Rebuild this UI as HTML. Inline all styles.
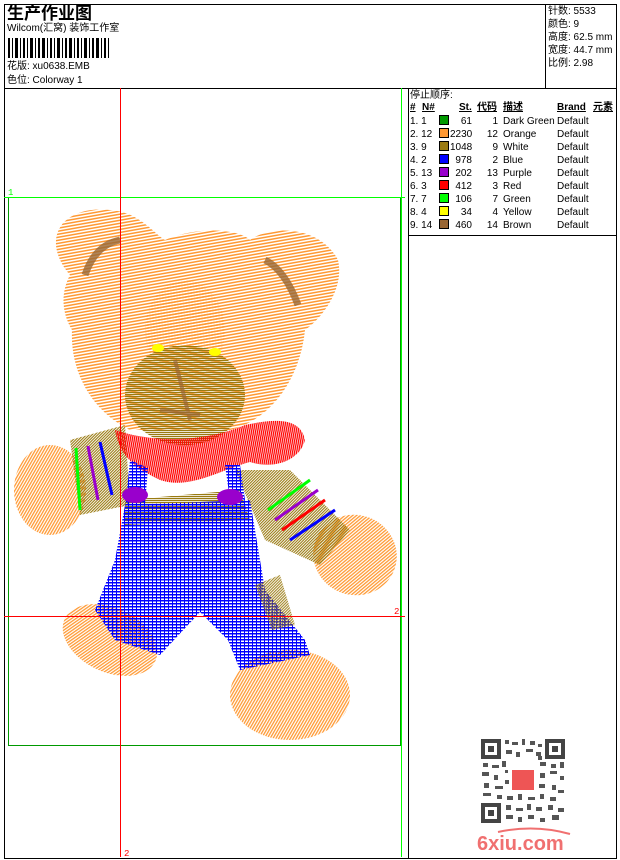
<!DOCTYPE html>
<html><head><meta charset="utf-8"><style>
body{margin:0;width:620px;height:860px;background:#fff;position:relative;overflow:hidden;font-family:"Liberation Sans","Noto Sans CJK SC",sans-serif;color:#000}
.t{position:absolute;font-size:10px;line-height:12px;white-space:nowrap}
</style></head><body>
<svg width="620" height="860" style="position:absolute;left:0;top:0">
<defs>
<pattern id="po" width="3" height="3" patternUnits="userSpaceOnUse" patternTransform="rotate(80)"><rect width="1.5" height="3" fill="#ff9933"/></pattern>
<pattern id="po2" width="2.5" height="2.5" patternUnits="userSpaceOnUse" patternTransform="rotate(30)"><rect width="1.3" height="2.5" fill="#ff9933"/></pattern>
<pattern id="pol" width="3" height="2" patternUnits="userSpaceOnUse"><rect width="3" height="1.2" fill="#9a7b12"/></pattern>
<pattern id="pol2" width="2" height="2" patternUnits="userSpaceOnUse" patternTransform="rotate(45)"><rect width="1.1" height="2" fill="#9a7b12"/></pattern>
<pattern id="pb" width="4" height="3" patternUnits="userSpaceOnUse"><rect width="4" height="1.5" fill="#0000ff"/><rect width="1" height="3" fill="#0000ff"/></pattern>
<pattern id="pr" width="2" height="3" patternUnits="userSpaceOnUse" patternTransform="rotate(10)"><rect width="1.3" height="3" fill="#ff0000"/></pattern>
</defs>
<rect x="4.5" y="4.5" width="612" height="854" fill="none" stroke="#000"/>
<line x1="4" y1="88.5" x2="617" y2="88.5" stroke="#000"/>
<line x1="545.5" y1="4" x2="545.5" y2="88" stroke="#000"/>
<line x1="408.5" y1="88" x2="408.5" y2="858" stroke="#000"/>
<line x1="408" y1="235.5" x2="617" y2="235.5" stroke="#000"/>
<rect x="8.5" y="197.5" width="392" height="548" fill="none" stroke="#009900"/>
<line x1="4" y1="197.5" x2="405" y2="197.5" stroke="#00ff00"/>
<line x1="401.5" y1="88" x2="401.5" y2="857" stroke="#00ff00"/>
<text x="8" y="195" font-size="9" fill="#00ff00" font-family="Liberation Mono">1</text>
<ellipse cx="110" cy="640" rx="50" ry="32" transform="rotate(25 110 640)" fill="url(#po2)"/>
<ellipse cx="290" cy="695" rx="60" ry="45" fill="url(#po2)"/>
<ellipse cx="50" cy="490" rx="36" ry="45" fill="url(#po2)"/>
<ellipse cx="355" cy="555" rx="42" ry="40" transform="rotate(20 355 555)" fill="url(#po2)"/>
<path d="M70,440 L125,425 L130,505 L80,515 Z" fill="url(#pol2)"/>
<path d="M235,470 L290,470 L350,530 L320,565 L265,540 Z" fill="url(#pol2)"/>
<path d="M76,448 L80,510" stroke="#00ff00" stroke-width="3"/>
<path d="M88,446 L98,500" stroke="#9900cc" stroke-width="3"/>
<path d="M100,442 L112,495" stroke="#0000ff" stroke-width="3"/>
<path d="M268,510 L310,480" stroke="#00ff00" stroke-width="3"/>
<path d="M275,520 L318,490" stroke="#9900cc" stroke-width="3"/>
<path d="M282,530 L325,500" stroke="#ff0000" stroke-width="3"/>
<path d="M290,540 L335,510" stroke="#0000ff" stroke-width="3"/>
<path d="M70,275 C40,240 60,205 110,210 C140,212 155,235 165,240 C200,225 240,230 250,240 C270,225 320,225 338,260 C345,290 320,320 305,330 C300,380 270,420 230,430 L130,430 C90,410 70,370 72,330 C60,310 62,290 70,275 Z" fill="url(#po)"/>
<ellipse cx="185" cy="330" rx="40" ry="50" fill="url(#po)"/>
<ellipse cx="185" cy="395" rx="60" ry="50" fill="url(#pol)"/>
<path d="M175,360 L190,420 M160,410 L200,415" stroke="#996633" stroke-width="4" opacity=".7"/>
<path d="M85,275 Q95,245 120,240" stroke="#996633" stroke-width="7" fill="none" opacity=".8"/>
<path d="M265,260 Q285,270 298,305" stroke="#996633" stroke-width="7" fill="none" opacity=".8"/>
<ellipse cx="158" cy="348" rx="6" ry="4" fill="#ffff00"/>
<ellipse cx="215" cy="352" rx="6" ry="4" fill="#ffff00"/>
<path d="M125,500 L240,490 L250,520 L125,525 Z" fill="url(#pol)"/>
<path d="M115,430 C160,445 210,440 245,425 C270,420 300,415 305,440 C300,460 275,470 250,462 C220,470 190,490 160,480 C140,470 120,460 115,430 Z" fill="url(#pr)"/>
<path d="M130,460 L148,468 L145,505 L125,510 Z" fill="url(#pb)"/>
<path d="M225,465 L240,465 L245,500 L230,500 Z" fill="url(#pb)"/>
<path d="M125,505 L250,500 L265,590 L305,640 L310,655 L240,670 L228,640 L200,612 L160,655 L115,640 L95,610 L115,560 Z" fill="url(#pb)"/>
<ellipse cx="135" cy="495" rx="13" ry="8" fill="#9900cc"/>
<ellipse cx="230" cy="497" rx="13" ry="8" fill="#9900cc"/>
<path d="M255,585 L280,575 L295,625 L272,630 Z" fill="url(#pol2)" opacity=".9"/>
<line x1="120.5" y1="88" x2="120.5" y2="857" stroke="#ff0000"/>
<line x1="4" y1="616.5" x2="405" y2="616.5" stroke="#ff0000"/>
<text x="394" y="614" font-size="9" fill="#ff0000" font-family="Liberation Mono">2</text>
<text x="124" y="856" font-size="9" fill="#ff0000" font-family="Liberation Mono">2</text>
<g fill="#000">
<rect x="8" y="38" width="2" height="20"/><rect x="12" y="38" width="1" height="20"/><rect x="15" y="38" width="3" height="20"/><rect x="20" y="38" width="1" height="20"/><rect x="23" y="38" width="2" height="20"/><rect x="27" y="38" width="1" height="20"/><rect x="30" y="38" width="3" height="20"/><rect x="35" y="38" width="1" height="20"/><rect x="38" y="38" width="2" height="20"/><rect x="42" y="38" width="3" height="20"/><rect x="47" y="38" width="1" height="20"/><rect x="50" y="38" width="2" height="20"/><rect x="54" y="38" width="1" height="20"/><rect x="57" y="38" width="3" height="20"/><rect x="62" y="38" width="1" height="20"/><rect x="65" y="38" width="2" height="20"/><rect x="69" y="38" width="3" height="20"/><rect x="74" y="38" width="1" height="20"/><rect x="77" y="38" width="2" height="20"/><rect x="81" y="38" width="1" height="20"/><rect x="84" y="38" width="3" height="20"/><rect x="89" y="38" width="1" height="20"/><rect x="92" y="38" width="2" height="20"/><rect x="96" y="38" width="3" height="20"/><rect x="101" y="38" width="1" height="20"/><rect x="104" y="38" width="2" height="20"/><rect x="108" y="38" width="1" height="20"/>
</g>
<g stroke="#000" stroke-width="1">
<rect x="439.5" y="115.5" width="9" height="9" fill="#009900"/>
<rect x="439.5" y="128.5" width="9" height="9" fill="#ff9933"/>
<rect x="439.5" y="141.5" width="9" height="9" fill="#9a7b12"/>
<rect x="439.5" y="154.5" width="9" height="9" fill="#0000ff"/>
<rect x="439.5" y="167.5" width="9" height="9" fill="#9900cc"/>
<rect x="439.5" y="180.5" width="9" height="9" fill="#ff0000"/>
<rect x="439.5" y="193.5" width="9" height="9" fill="#00ff00"/>
<rect x="439.5" y="206.5" width="9" height="9" fill="#ffff00"/>
<rect x="439.5" y="219.5" width="9" height="9" fill="#996633"/>
</g>
<g fill="#444">
<g fill="#555">
<rect x="505" y="740" width="4" height="4"/><rect x="512" y="742" width="6" height="3"/><rect x="522" y="739" width="3" height="6"/><rect x="530" y="741" width="5" height="4"/><rect x="538" y="744" width="4" height="3"/>
<rect x="506" y="750" width="6" height="4"/><rect x="516" y="752" width="4" height="5"/><rect x="526" y="749" width="7" height="3"/><rect x="536" y="752" width="5" height="4"/>
<rect x="483" y="763" width="5" height="4"/><rect x="492" y="765" width="7" height="3"/><rect x="502" y="761" width="4" height="6"/><rect x="540" y="762" width="6" height="4"/><rect x="551" y="764" width="5" height="4"/><rect x="560" y="762" width="4" height="6"/>
<rect x="482" y="772" width="7" height="4"/><rect x="494" y="775" width="4" height="5"/><rect x="540" y="773" width="5" height="5"/><rect x="550" y="771" width="7" height="3"/><rect x="560" y="776" width="4" height="4"/>
<rect x="484" y="783" width="5" height="5"/><rect x="495" y="786" width="8" height="3"/><rect x="539" y="784" width="6" height="4"/><rect x="552" y="785" width="4" height="5"/><rect x="558" y="790" width="6" height="3"/>
<rect x="483" y="793" width="8" height="3"/><rect x="497" y="795" width="5" height="4"/><rect x="507" y="796" width="6" height="4"/><rect x="518" y="794" width="4" height="6"/><rect x="528" y="797" width="7" height="3"/><rect x="540" y="794" width="4" height="5"/><rect x="550" y="797" width="6" height="4"/>
<rect x="506" y="805" width="5" height="5"/><rect x="516" y="808" width="7" height="3"/><rect x="527" y="804" width="4" height="6"/><rect x="536" y="807" width="6" height="4"/><rect x="548" y="805" width="5" height="5"/><rect x="558" y="808" width="6" height="4"/>
<rect x="506" y="815" width="7" height="4"/><rect x="518" y="817" width="4" height="5"/><rect x="528" y="815" width="6" height="4"/><rect x="540" y="818" width="5" height="4"/><rect x="552" y="815" width="7" height="5"/>
<rect x="505" y="770" width="3" height="3"/><rect x="505" y="780" width="4" height="4"/><rect x="538" y="756" width="4" height="4"/>
</g>
<rect x="481" y="739" width="20" height="20"/><rect x="485" y="743" width="12" height="12" fill="#fff"/><rect x="488" y="746" width="6" height="6"/>
<rect x="545" y="739" width="20" height="20"/><rect x="549" y="743" width="12" height="12" fill="#fff"/><rect x="552" y="746" width="6" height="6"/>
<rect x="481" y="803" width="20" height="20"/><rect x="485" y="807" width="12" height="12" fill="#fff"/><rect x="488" y="810" width="6" height="6"/>
<rect x="510" y="768" width="26" height="24" fill="#fff"/>
<rect x="512" y="770" width="22" height="20" fill="#ee5555"/>
</g>
<text x="477" y="850" font-size="20" font-weight="bold" fill="#f07070" font-family="Liberation Sans">6xiu.com</text>
<path d="M498,832 Q535,824 570,834" stroke="#f07070" stroke-width="2" fill="none"/>
</svg>
<div class="t" style="left:7px;top:4px;font-size:17px;line-height:20px;font-weight:bold">生产作业图</div>
<div class="t" style="left:7px;top:23px">Wilcom(汇窝) 装饰工作室</div>
<div class="t" style="left:7px;top:61px">花版: xu0638.EMB</div>
<div class="t" style="left:7px;top:75px">色位: Colorway 1</div>
<div class="t" style="left:548px;top:5px;line-height:13px">针数: 5533<br>颜色: 9<br>高度: 62.5 mm<br>宽度: 44.7 mm<br>比例: 2.98</div>
<div class="t" style="left:410px;top:90px">停止顺序:</div>
<div class="t" style="left:410px;top:102px;font-weight:bold;text-decoration:underline">#</div>
<div class="t" style="left:422px;top:102px;font-weight:bold;text-decoration:underline">N#</div>
<div class="t" style="left:459px;top:102px;font-weight:bold;text-decoration:underline">St.</div>
<div class="t" style="left:477px;top:102px;font-weight:bold;text-decoration:underline">代码</div>
<div class="t" style="left:503px;top:102px;font-weight:bold;text-decoration:underline">描述</div>
<div class="t" style="left:557px;top:102px;font-weight:bold;text-decoration:underline">Brand</div>
<div class="t" style="left:593px;top:102px;font-weight:bold;text-decoration:underline">元素</div>
<div class="t" style="left:410px;top:115px;line-height:13px">1. 1<br>2. 12<br>3. 9<br>4. 2<br>5. 13<br>6. 3<br>7. 7<br>8. 4<br>9. 14</div>
<div class="t" style="left:450px;top:115px;line-height:13px;width:22px;text-align:right">61<br>2230<br>1048<br>978<br>202<br>412<br>106<br>34<br>460</div>
<div class="t" style="left:480px;top:115px;line-height:13px;width:18px;text-align:right">1<br>12<br>9<br>2<br>13<br>3<br>7<br>4<br>14</div>
<div class="t" style="left:503px;top:115px;line-height:13px">Dark Green<br>Orange<br>White<br>Blue<br>Purple<br>Red<br>Green<br>Yellow<br>Brown</div>
<div class="t" style="left:557px;top:115px;line-height:13px">Default<br>Default<br>Default<br>Default<br>Default<br>Default<br>Default<br>Default<br>Default</div>
</body></html>
